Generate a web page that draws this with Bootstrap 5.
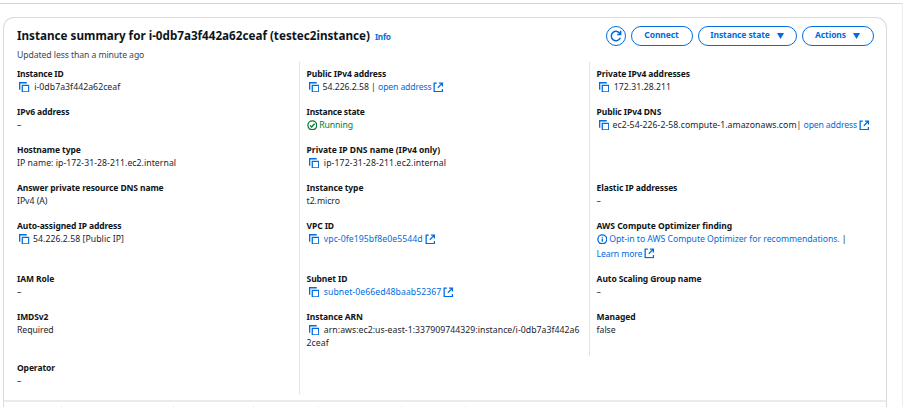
<!DOCTYPE html>
<html lang="en">
<head>
<meta charset="utf-8">
<meta name="viewport" content="width=device-width, initial-scale=1">
<title>Instance summary</title>
<link href="https://cdn.jsdelivr.net/npm/bootstrap@5.3.0/dist/css/bootstrap.min.css" rel="stylesheet">
<style>
body{font-family:"Noto Sans","Open Sans",sans-serif;font-size:8.7px;line-height:12.7px;color:#1b232d;background:#fff;height:407px;padding-top:3px}
a{color:#006ce0;text-decoration:none}
.page{height:404px;padding:13px 15.5px 0 3px;border-top:1px solid #d6d6da;border-right:1px solid #ededf0}
.summary{height:390px;border:1px solid #d9dbdf;border-bottom:0;border-radius:11px 11px 0 0;background:#fff}
.summary-head{padding:7.5px 12px 0 13px;height:44px}
.title{font-size:11.66px;line-height:20px;font-weight:700;color:#0f141a;margin:0;white-space:nowrap}
.info{font-size:8.2px;font-weight:700;margin-left:5px;letter-spacing:-.25px}
.updated{color:#424650;letter-spacing:-.1px;margin-top:2px}
.aws-btn{--bs-btn-color:#006ce0;--bs-btn-border-color:#006ce0;--bs-btn-border-radius:10px;--bs-btn-border-width:1.4px;--bs-btn-font-size:8.5px;--bs-btn-font-weight:700;--bs-btn-padding-x:0;--bs-btn-padding-y:0;--bs-btn-hover-bg:#f0fbff;--bs-btn-hover-color:#002b66;height:20px;line-height:1;display:flex;align-items:center;justify-content:center;letter-spacing:-.1px}
.w-refresh{width:20px}.w-connect{width:62px}.w-state{width:99px}.w-actions{width:72px}
.aws-btn .ico{width:12px;height:12px}
.caret-dn{width:7px;height:6px;margin-left:7px;fill:#006ce0}
.fields{display:grid;grid-template-columns:281.6px 290px 1fr;grid-template-rows:38px 38px 38px 38px 53px 38px 51px 38px;padding-left:13px}
.fields>div{padding-top:5.9px;white-space:nowrap}
.fields>.c2,.fields>.c3{border-left:1px solid #e2e3e7;padding-left:7px}
.lbl{font-size:8.5px;font-weight:700;color:#0f141a;letter-spacing:-.1px;margin-bottom:.5px}
.tight{letter-spacing:-.2px}.even{letter-spacing:-.02px}
.val{letter-spacing:-.04px}
.wide{letter-spacing:.05px}.wider{letter-spacing:.12px}
.lnk{letter-spacing:-.16px}
.ico{width:10.6px;height:10.6px;fill:none;stroke:#006ce0;stroke-width:1.35;vertical-align:-2px;flex:none;margin-top:-1px}
.copy{margin-right:4.6px;margin-left:2px}.copy-s{margin-right:3.4px;margin-left:2px}
.ext{margin-left:2px}
.stat{margin-right:2px}
.running{color:#00802f;letter-spacing:-.1px}.running .ico{stroke:#00802f}
.row-more{line-height:17px}
.lower{border-top:2px solid #ebebed;margin-top:6px;padding-top:4px}
.tab-sep{height:20px;border-right:1px solid #e2e3e7}
.s1{width:58px}.s2{width:112px}.s3{width:80px}.s4{width:65px}.s5{width:83px}.s6{width:64px}
</style>
</head>
<body class="overflow-hidden">
<svg class="d-none">
<symbol id="copy" viewBox="0 0 11 11"><path d="M.7 8V.8H8"/><path d="M3.4 3.6h6.7v6.7H3.4z"/></symbol>
<symbol id="ext" viewBox="0 0 11 11"><path d="M4 1.2H1.2v8.7h8.6V7.3M6.2 1.2h3.6v3.6M9.8 1.2 5 6"/></symbol>
</svg>
<div class="page">
<section class="summary overflow-hidden">
<header class="summary-head d-flex justify-content-between align-items-start">
<div>
<h1 class="title">Instance summary for i-0db7a3f442a62ceaf (testec2instance)<a href="#" class="info">Info</a></h1>
<div class="updated">Updated less than a minute ago</div>
</div>
<div class="d-flex" style="gap:5px">
<button class="btn aws-btn w-refresh" aria-label="Refresh"><svg class="ico mt-0" viewBox="0 0 11 11"><path d="M9.5 7.1A4.3 4.3 0 1 1 9.4 3.7M9.8.8v3.3H6.5"/></svg></button>
<button class="btn aws-btn w-connect">Connect</button>
<button class="btn aws-btn w-state">Instance state<svg viewBox="0 0 7 6" class="caret-dn"><path d="M0 0h7L3.5 6z"/></svg></button>
<button class="btn aws-btn w-actions">Actions<svg viewBox="0 0 7 6" class="caret-dn"><path d="M0 0h7L3.5 6z"/></svg></button>
</div>
</header>
<div class="fields">
<div><div class="lbl tight">Instance ID</div><div class="wide"><svg class="ico copy"><use href="#copy"/></svg>i-0db7a3f442a62ceaf</div></div>
<div class="c2"><div class="lbl">Public IPv4 address</div><div class="val"><svg class="ico copy-s"><use href="#copy"/></svg>54.226.2.58 | <a href="#" class="lnk">open address</a><svg class="ico ext"><use href="#ext"/></svg></div></div>
<div class="c3"><div class="lbl">Private IPv4 addresses</div><div class="wide"><svg class="ico copy"><use href="#copy"/></svg>172.31.28.211</div></div>

<div><div class="lbl">IPv6 address</div><div>–</div></div>
<div class="c2"><div class="lbl tight">Instance state</div><div class="running"><svg class="ico stat" viewBox="0 0 11 11"><circle cx="5.5" cy="5.5" r="4.6"/><path d="m3.2 5.6 1.7 1.7 2.9-3.4"/></svg>Running</div></div>
<div class="c3"><div class="lbl">Public IPv4 DNS</div><div class="val"><svg class="ico copy-s"><use href="#copy"/></svg><span class="wide">ec2-54-226-2-58.compute-1.amazonaws.com</span>| <a href="#" class="lnk">open address</a><svg class="ico ext"><use href="#ext"/></svg></div></div>

<div><div class="lbl">Hostname type</div><div class="wide">IP name: ip-172-31-28-211.ec2.internal</div></div>
<div class="c2"><div class="lbl even">Private IP DNS name (IPv4 only)</div><div class="wider"><svg class="ico copy"><use href="#copy"/></svg>ip-172-31-28-211.ec2.internal</div></div>
<div class="c3"></div>

<div><div class="lbl">Answer private resource DNS name</div><div class="val">IPv4 (A)</div></div>
<div class="c2"><div class="lbl">Instance type</div><div class="val">t2.micro</div></div>
<div class="c3"><div class="lbl">Elastic IP addresses</div><div>–</div></div>

<div><div class="lbl">Auto-assigned IP address</div><div class="wide"><svg class="ico copy-s"><use href="#copy"/></svg>54.226.2.58 [Public IP]</div></div>
<div class="c2"><div class="lbl">VPC ID</div><div class="wide"><svg class="ico copy"><use href="#copy"/></svg><a href="#">vpc-0fe195bf8e0e5544d</a><svg class="ico ext"><use href="#ext"/></svg></div></div>
<div class="c3"><div class="lbl even">AWS Compute Optimizer finding</div><div class="val"><a href="#"><svg class="ico stat" viewBox="0 0 11 11"><circle cx="5.5" cy="5.5" r="4.6"/><path d="M5.5 4.8V8M5.5 2.8V4"/></svg>Opt-in to AWS Compute Optimizer for recommendations.</a> |</div><div class="lnk row-more"><a href="#">Learn more</a><svg class="ico ext"><use href="#ext"/></svg></div></div>

<div><div class="lbl">IAM Role</div><div>–</div></div>
<div class="c2"><div class="lbl">Subnet ID</div><div class="wide"><svg class="ico copy"><use href="#copy"/></svg><a href="#">subnet-0e66ed48baab52367</a><svg class="ico ext"><use href="#ext"/></svg></div></div>
<div class="c3"><div class="lbl">Auto Scaling Group name</div><div>–</div></div>

<div><div class="lbl">IMDSv2</div><div class="val">Required</div></div>
<div class="c2"><div class="lbl">Instance ARN</div><div class="wide"><svg class="ico copy"><use href="#copy"/></svg>arn:aws:ec2:us-east-1:337909744329:instance/i-0db7a3f442a6<br>2ceaf</div></div>
<div class="c3"><div class="lbl">Managed</div><div class="val">false</div></div>

<div><div class="lbl">Operator</div><div>–</div></div>
<div class="c2"></div>
<div></div>
</div>
<div class="lower d-flex"><span class="tab-sep s1"></span><span class="tab-sep s2"></span><span class="tab-sep s3"></span><span class="tab-sep s4"></span><span class="tab-sep s5"></span><span class="tab-sep s6"></span></div>
</section>
</div>
<script src="https://cdn.jsdelivr.net/npm/bootstrap@5.3.0/dist/js/bootstrap.bundle.min.js"></script>
</body>
</html>
